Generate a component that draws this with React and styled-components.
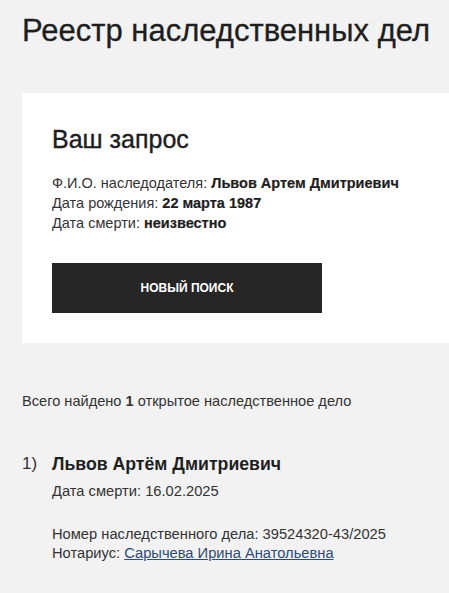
import React from 'react'
import styled, { createGlobalStyle } from 'styled-components'

const Global = createGlobalStyle`
  body {
    margin: 0;
    background: #f2f2f2;
    font-family: "Liberation Sans", Arial, sans-serif;
    color: #222;
  }
`

const Page = styled.div`
  padding: 13px 0 0 22px;
`

const Title = styled.h1`
  margin: 0;
  font-size: 31px;
  font-weight: 400;
  line-height: 36px;
  color: #1e1e1e;
  -webkit-text-stroke: 0.3px #1e1e1e;
`

const Card = styled.section`
  margin-top: 44px;
  background: #fff;
  padding: 30px 30px 30px 30px;
`

const CardTitle = styled.h2`
  margin: 0 0 18px;
  font-size: 25px;
  font-weight: 400;
  line-height: 32px;
  color: #1e1e1e;
  -webkit-text-stroke: 0.4px #1e1e1e;
`

const Line = styled.div`
  font-size: 14.5px;
  line-height: 20px;
  color: #333;
  b {
    color: #1e1e1e;
    -webkit-text-stroke: 0.2px #1e1e1e;
  }
`

const Button = styled.button`
  display: block;
  margin-top: 30px;
  width: 270px;
  height: 50px;
  border: 0;
  background: #262626;
  color: #fff;
  font-family: "Liberation Sans", Arial, sans-serif;
  font-size: 12px;
  font-weight: 700;
  text-transform: uppercase;
`

const Summary = styled.p`
  margin: 48px 0 0;
  font-size: 14.6px;
  line-height: 20px;
  color: #333;
`

const Item = styled.div`
  display: flex;
  margin-top: 42px;
`

const Num = styled.span`
  width: 30px;
  font-size: 17px;
  line-height: 22px;
  color: #333;
`

const Body = styled.div`
  font-size: 14.7px;
  line-height: 19px;
  color: #333;
`

const Name = styled.div`
  font-size: 17.7px;
  font-weight: 700;
  line-height: 22px;
  color: #1e1e1e;
  margin-bottom: 7px;
`

const Gap = styled.div`
  height: ${p => p.h}px;
`

const Link = styled.a`
  color: #2b4a7d;
  text-decoration: underline;
`

export default function App() {
  return (
    <Page>
      <Global />
      <Title>Реестр наследственных дел</Title>
      <Card>
        <CardTitle>Ваш запрос</CardTitle>
        <Line>Ф.И.О. наследодателя: <b>Львов Артем Дмитриевич</b></Line>
        <Line>Дата рождения: <b>22 марта 1987</b></Line>
        <Line>Дата смерти: <b>неизвестно</b></Line>
        <Button>Новый поиск</Button>
      </Card>
      <Summary>Всего найдено <b>1</b> открытое наследственное дело</Summary>
      <Item>
        <Num>1)</Num>
        <Body>
          <Name>Львов Артём Дмитриевич</Name>
          <div>Дата смерти: 16.02.2025</div>
          <Gap h={24} />
          <div>Номер наследственного дела: 39524320-43/2025</div>
          <div>Нотариус: <Link href="#">Сарычева Ирина Анатольевна</Link></div>
        </Body>
      </Item>
    </Page>
  )
}
